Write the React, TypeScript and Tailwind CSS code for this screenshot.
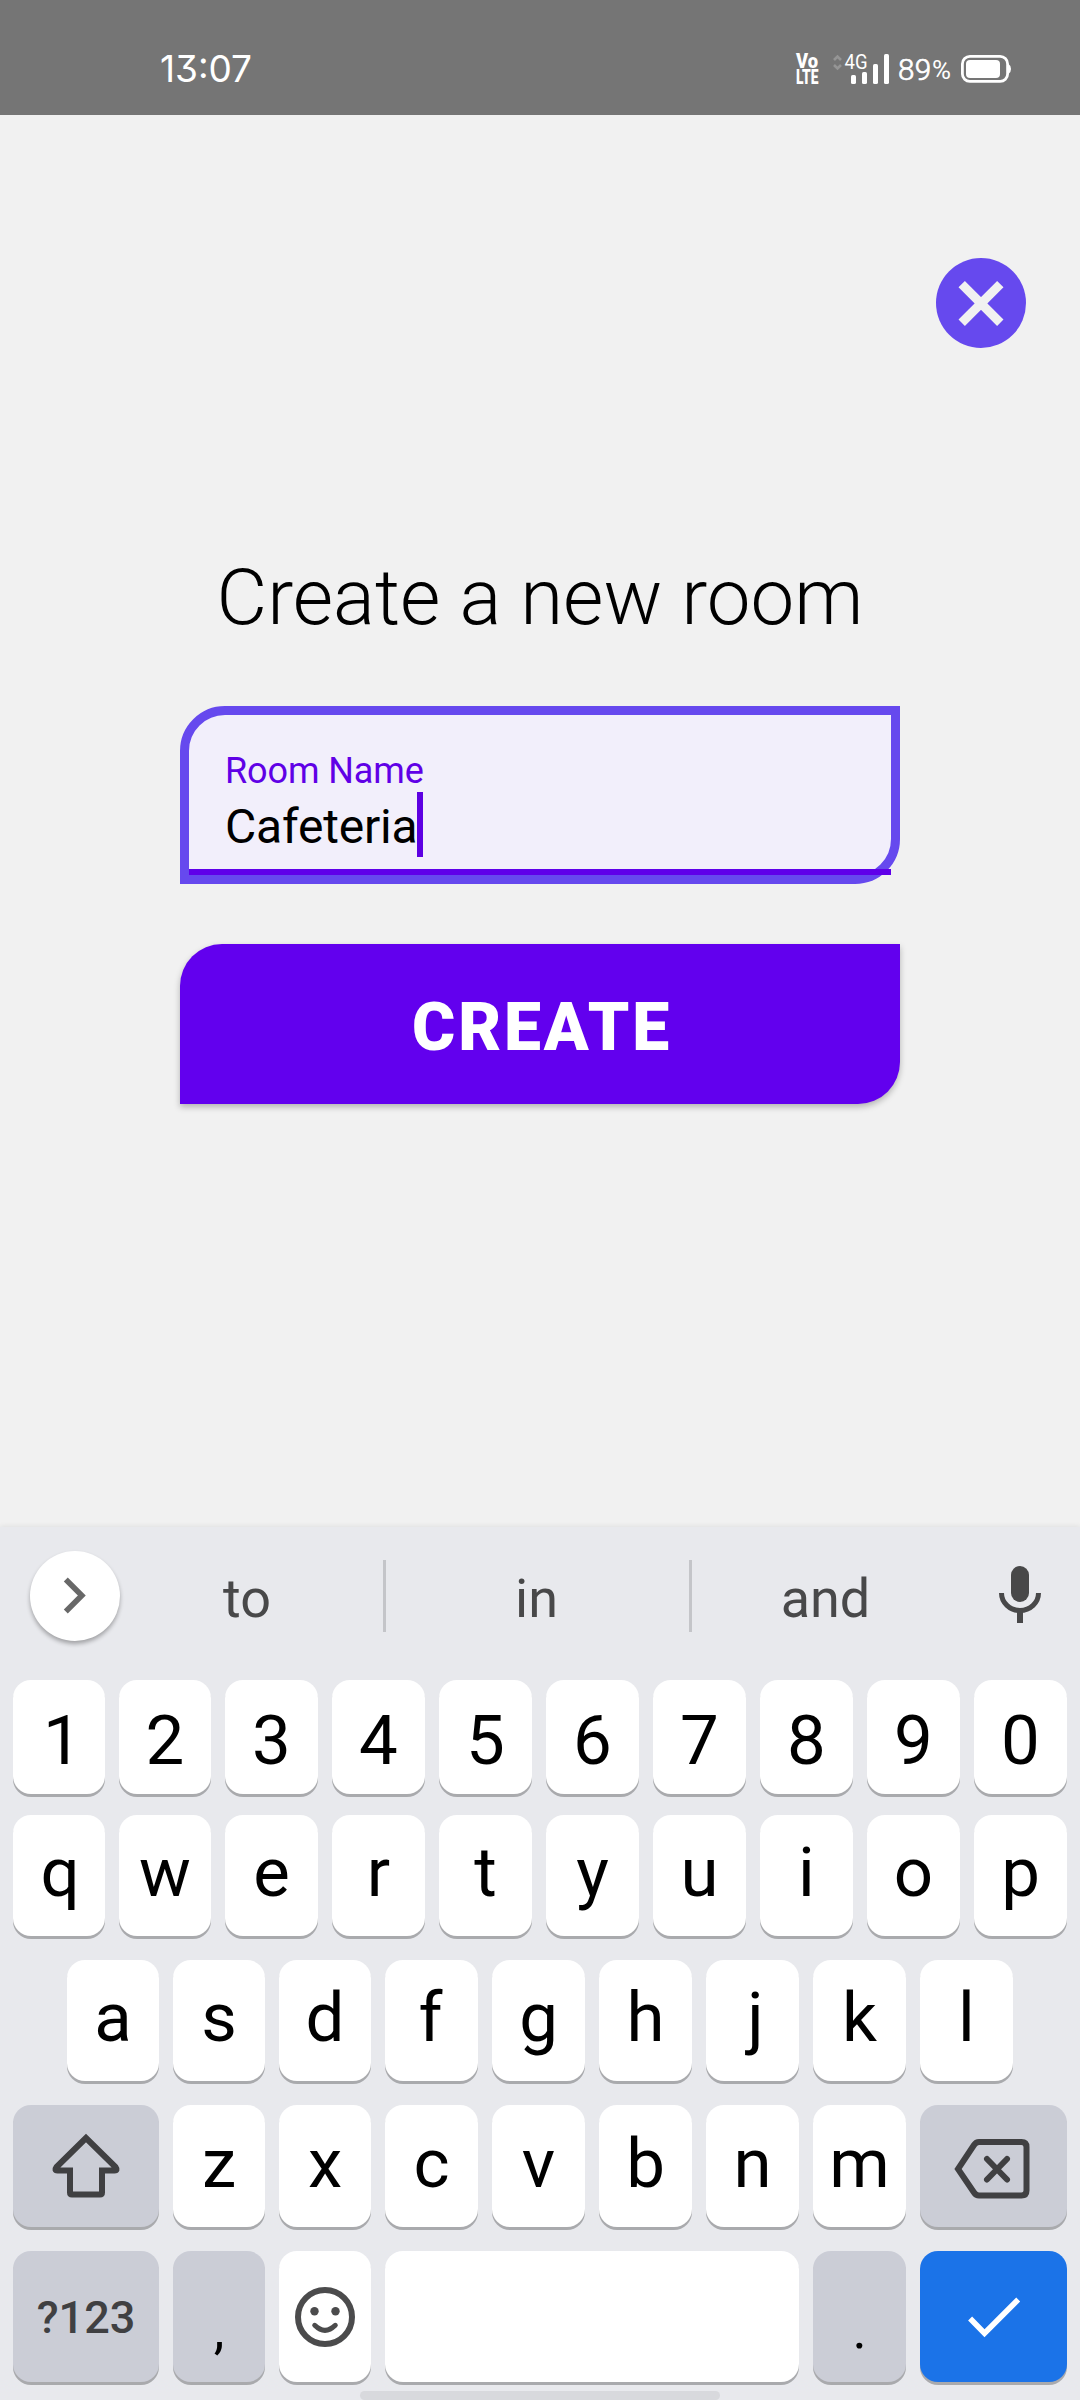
import type { ReactNode } from "react";

type KeyProps = {
  children?: ReactNode;
  width: string;
  tone?: string;
  inner?: string;
};

function Key({ children, width, tone = "bg-white", inner = "pb-1.5 text-[69px]" }: KeyProps) {
  return (
    <button
      className={`flex h-full shrink-0 items-center justify-center rounded-[18px] leading-none text-black shadow-[0_3px_0_#a9aaad] ${width} ${tone} ${inner}`}
    >
      {children}
    </button>
  );
}

const W92 = "w-[92px]";
const W93 = "w-[93px]";
const GREY = "bg-[#cbcdd6]";

// Optical side padding for glyphs that do not look centred by their advance width.
const NUDGE: Record<string, string> = {
  "1": "pl-[7px]",
  q: "pl-0.5",
  j: "pl-1.5",
  f: "pr-0.5",
};

function KeyRow({ letters, narrow, inner }: { letters: string; narrow: number; inner?: string }) {
  return (
    <>
      {letters.split("").map((c, i) => (
        <Key key={c} width={i < narrow ? W92 : W93} inner={inner}>
          <span className={NUDGE[c] ?? ""}>{c}</span>
        </Key>
      ))}
    </>
  );
}

function StatusBar() {
  return (
    <header className="flex h-[115px] items-start justify-between bg-[#757575] pl-[150px] pr-[68px] text-white">
      <svg className="mt-[38px]" width="116" height="60" viewBox="150 38 116 60" fill="white">
        <text
          x="160"
          y="82"
          fontFamily="Inter"
          fontSize="37"
          textLength="92"
          style={{ fontFeatureSettings: '"cv09"' }}
        >
          13:07
        </text>
      </svg>
      <svg className="mt-[38px]" width="218" height="60" viewBox="794 38 218 60" fill="white">
        <g fontFamily="Roboto" fontWeight="900" fontSize="20">
          <text x="796" y="68.4" textLength="22" lengthAdjust="spacingAndGlyphs">Vo</text>
          <text x="796" y="84" textLength="22.5" lengthAdjust="spacingAndGlyphs">LTE</text>
        </g>
        <path d="M834 60l3.5-3.5 3.5 3.5M834 65l3.5 3.5 3.5-3.5" fill="none" stroke="#959595" strokeWidth="2.6" />
        <text x="844.5" y="69" fontFamily="Roboto" fontSize="20.5" textLength="23" lengthAdjust="spacingAndGlyphs">4G</text>
        <rect x="851" y="75" width="5" height="9" rx="1.6" />
        <rect x="862" y="72" width="5" height="12" rx="1.6" />
        <rect x="873" y="64" width="5" height="20" rx="1.6" />
        <rect x="884" y="54" width="5" height="30" rx="1.6" />
        <text x="898" y="80" fontFamily="Roboto" fontSize="29.5" textLength="33" fontWeight="300" stroke="white" strokeWidth="0.7">89</text>
        <text x="932" y="78.5" fontFamily="Roboto" fontSize="26" textLength="19" lengthAdjust="spacingAndGlyphs">%</text>
        <rect x="962.4" y="56.4" width="45.2" height="25" rx="7.5" fill="none" stroke="white" strokeWidth="2.8" />
        <rect x="966" y="60" width="34" height="18" rx="4" />
        <path d="M1008.5 64q2.5 1.5 2.5 5t-2.500 5z" />
      </svg>
    </header>
  );
}

function RoomForm() {
  return (
    <main className="flex h-[1412px] flex-col bg-[#f1f1f1]">
      <button className="mr-[54px] mt-[143px] size-[90px] self-end rounded-full bg-[#6649ee]">
        <svg width="90" height="90" viewBox="0 0 90 90" stroke="#f1f1f1" strokeWidth="9">
          <path d="M25.700 26.100l38.600 38.600M64.300 26.100L25.700 64.700" />
        </svg>
      </button>
      <h1 className="mt-[205px] h-[90px] text-center text-[78px] font-light leading-[90px] text-black">
        Create a new room
      </h1>
      <div className="relative mx-[180px] mt-[63px] flex h-[178px] flex-col rounded-br-[45px] rounded-tl-[45px] border-[9px] border-[#6649ee] bg-[#f2effb] pl-[36px] pt-[35px]">
        <label className="h-[42px] text-[36px] leading-[42px] tracking-[-0.1px] text-[#6000e6]">Room Name</label>
        <div className="mt-[5px] flex h-[60px] items-start text-[48px] leading-[60px] text-black">
          <span className="tracking-[-0.2px]">Cafeteria</span>
          <span className="-mt-[5px] h-[65px] w-1.5 bg-[#5d00e2]" />
        </div>
        <div className="absolute bottom-0 left-0 h-1.5 w-[702px] bg-[#5f00e9]" />
      </div>
      <button className="mx-[180px] mt-[60px] h-[160px] rounded-br-[42px] rounded-tl-[42px] bg-[#6200ee] pl-[4px] pt-[7px] text-[66px] font-black leading-none tracking-[2.8px] text-white shadow-[0_3px_6px_rgba(0,0,0,0.26)]">
        CREATE
      </button>
    </main>
  );
}

function SuggestionBar() {
  return (
    <div className="flex h-[153px] items-start text-[54px] text-[#484849]">
      <button className="ml-[30px] mt-[24px] size-[90px] shrink-0 rounded-full bg-white shadow-[0_3px_4px_rgba(0,0,0,0.3)]">
        <svg width="90" height="90" viewBox="0 0 90 90" fill="none" stroke="#686868" strokeWidth="5.6">
          <path d="M35.800 28.500l16 16-16 16" />
        </svg>
      </button>
      <div className="ml-[-11px] mt-[35px] h-[72px] w-[274px] pl-0.5 text-center leading-[73px]">to</div>
      <div className="mt-[33px] h-[72px] w-[3px] bg-[#c4c5c9]" />
      <div className="mt-[35px] h-[72px] w-[303px] pr-0.5 text-center leading-[73px]">in</div>
      <div className="mt-[33px] h-[72px] w-[3px] bg-[#c4c5c9]" />
      <div className="mt-[35px] h-[72px] w-[267px] text-center leading-[73px]">and</div>
      <svg className="ml-[35px] mt-[33px]" width="52" height="72" viewBox="994 1560 52 72" fill="#484849">
        <rect x="1011" y="1566" width="18" height="36" rx="9" />
        <path d="M1001.500 1593a18.500 17.500 0 0 0 37 0" fill="none" stroke="#484849" strokeWidth="5" />
        <rect x="1017" y="1611" width="6" height="12" />
      </svg>
    </div>
  );
}

function Keyboard() {
  return (
    <section className="h-[873px] overflow-hidden bg-[#e8e9ed] shadow-[0_-1px_5px_rgba(0,0,0,0.07)]">
      <SuggestionBar />
      <div className="flex h-[114px] gap-3.5 pl-[13px]">
        <KeyRow letters="1234567890" narrow={2} inner="pt-[7px] text-[69px]" />
      </div>
      <div className="mt-[21px] flex h-[121px] gap-3.5 pl-[13px]">
        <KeyRow letters="qwertyuiop" narrow={2} />
      </div>
      <div className="mt-6 flex h-[121px] gap-3.5 pl-[67px]">
        <KeyRow letters="asdfghjkl" narrow={3} />
      </div>
      <div className="mt-6 flex h-[122px] gap-3.5 pl-[13px]">
        <Key width="w-[146px]" tone={GREY} inner="">
          <svg width="72" height="72" viewBox="0 0 72 72" fill="none" stroke="#404042" strokeWidth="6">
            <path d="M36 8L6.500 37Q4 40.500 7.500 40.500H20V62.500Q20 64.500 22 64.500H50Q52 64.500 52 62.500V40.500H64.500Q68 40.500 65.500 37Z" />
          </svg>
        </Key>
        <KeyRow letters="zxcvbnm" narrow={2} />
        <Key width="w-[147px]" tone={GREY} inner="">
          <svg width="86" height="66" viewBox="951 2133 86 66" fill="none" stroke="#404042" strokeWidth="6">
            <path d="M979 2142H1021.500q5 0 5 5V2190.500q0 5-5 5H979q-3 0-5-3L958 2169l16-24q2-3 5-3z" />
            <path d="M987 2159l20 20.500M1007 2159l-20 20.500" strokeLinecap="round" />
          </svg>
        </Key>
      </div>
      <div className="mt-6 flex h-[131px] gap-3.5 pl-[13px]">
        <Key width="w-[146px]" tone={GREY} inner="pt-0.5 text-[45px] font-medium">
          <span className="text-[#404042]">?123</span>
        </Key>
        <Key width={W92} tone={GREY} inner="pt-[26px] text-[54px]">,</Key>
        <Key width={W92} inner="">
          <svg width="60" height="60" viewBox="0 0 60 60" fill="none" stroke="#4b4b4c">
            <circle cx="30" cy="30" r="27" strokeWidth="6" />
            <circle cx="19.500" cy="24.300" r="4.200" fill="#4b4b4c" stroke="none" />
            <circle cx="40.500" cy="24.300" r="4.200" fill="#4b4b4c" stroke="none" />
            <path d="M19.700 38.300q10.300 10 20.600 0" strokeWidth="5" strokeLinecap="round" />
          </svg>
        </Key>
        <Key width="w-[414px]" />
        <Key width={W93} tone={GREY} inner="pt-[26px] text-[54px]">.</Key>
        <Key width="w-[147px]" tone="bg-[#1b73e8]" inner="">
          <svg width="60" height="60" viewBox="963.500 2286.500 60 60" fill="none" stroke="white" strokeWidth="5.600">
            <path d="M969.600 2318l14.400 14.700 33.700-33.700" />
          </svg>
        </Key>
      </div>
      <div className="mx-auto mt-[9px] h-[9px] w-[360px] rounded-[4.5px] bg-[#d8d9dd]" />
    </section>
  );
}

export default function App() {
  return (
    <div className="h-[2400px] w-[1080px] overflow-hidden bg-[#f1f1f1] font-['Roboto',sans-serif]">
      <StatusBar />
      <RoomForm />
      <Keyboard />
    </div>
  );
}
